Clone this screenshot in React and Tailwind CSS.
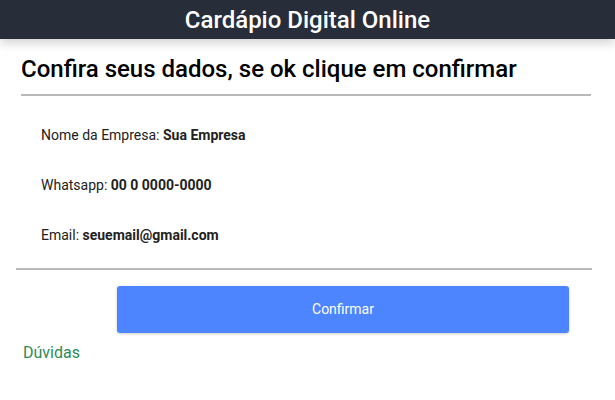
export default function App() {
  return (
    <div className="w-[615px] h-[400px] bg-white" style={{ fontFamily: 'Roboto, "Liberation Sans", sans-serif' }}>
      <header className="h-[39px] bg-[#282d3a] flex items-center justify-center shadow-[0_4px_10px_rgba(0,0,0,0.18)] relative">
        <h1 className="text-white text-[24px] font-medium leading-none">Cardápio Digital Online</h1>
      </header>
      <div className="pl-[21px] pr-[24px] pt-[14px]">
        <h2 className="text-[24px] font-medium text-black leading-[32px]">Confira seus dados, se ok clique em confirmar</h2>
        <div className="mt-[9px] h-[2px] bg-[#b9b9b9]" />
      </div>
      <div className="pl-[41px] pt-[31px] text-[14px] text-[#222] flex flex-col gap-[34px] leading-[16px]">
        <p>Nome da Empresa: <b className="font-bold">Sua Empresa</b></p>
        <p>Whatsapp: <b className="font-bold">00 0 0000-0000</b></p>
        <p>Email: <b className="font-bold">seuemail@gmail.com</b></p>
      </div>
      <div className="pl-[16px] pr-[23px] mt-[25px]">
        <div className="h-[2px] bg-[#b9b9b9]" />
      </div>
      <div className="pl-[117px] pr-[46px] mt-[16px]">
        <button className="w-full h-[47px] bg-[#4d84ff] text-white text-[14px] rounded-[3px] shadow-[0_1px_3px_rgba(0,0,0,0.2)]">Confirmar</button>
      </div>
      <div className="pl-[23px] mt-[10px] text-[16px] text-[#2e8b57] leading-[20px]">Dúvidas</div>
    </div>
  );
}
